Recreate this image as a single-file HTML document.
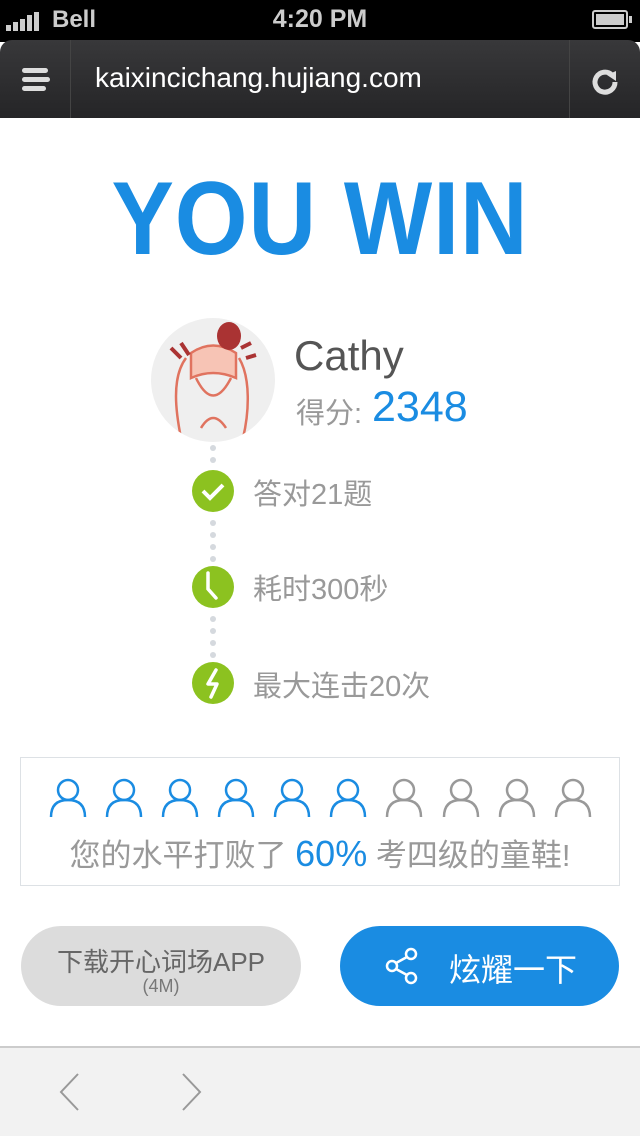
<!DOCTYPE html>
<html><head><meta charset="utf-8"><style>
*{margin:0;padding:0;box-sizing:border-box}
body{width:640px;height:1136px;position:relative;background:#fff;font-family:"Liberation Sans","Noto Sans CJK SC",sans-serif;overflow:hidden}
.a{position:absolute}
.cj{font-family:"Liberation Sans","Noto Sans CJK SC",sans-serif}
</style></head><body>
<div class="a" style="left:0;top:0;width:640px;height:42px;background:#000"></div>
<div class="a" style="left:6px;top:12px;display:flex;align-items:flex-end;gap:2px">
<div style="width:5px;height:6px;background:#ccc"></div><div style="width:5px;height:9px;background:#ccc"></div><div style="width:5px;height:12px;background:#ccc"></div><div style="width:5px;height:16px;background:#ccc"></div><div style="width:5px;height:19px;background:#ccc"></div></div>
<div class="a" style="left:52px;top:6px;color:#ccc;font-size:24px;font-weight:bold">Bell</div>
<div class="a" style="left:0;width:640px;top:5px;text-align:center;color:#ccc;font-size:25px;font-weight:bold">4:20 PM</div>
<div class="a" style="left:592px;top:10px;width:36px;height:19px;border:2px solid #ccc;border-radius:3px;padding:2px"><div style="background:#ccc;width:100%;height:100%"></div></div>
<div class="a" style="left:629px;top:16px;width:3px;height:7px;background:#ccc"></div>
<div class="a" style="left:0;top:40px;width:640px;height:78px;background:linear-gradient(#38383a,#252527);border-radius:12px 12px 0 0"></div>
<div class="a" style="left:70px;top:40px;width:1px;height:78px;background:#444"></div>
<div class="a" style="left:569px;top:40px;width:1px;height:78px;background:#444"></div>
<div class="a" style="left:22px;top:68px;width:26px;height:5px;background:#ddd;border-radius:3px"></div>
<div class="a" style="left:22px;top:77px;width:28px;height:5px;background:#ddd;border-radius:3px"></div>
<div class="a" style="left:22px;top:86px;width:24px;height:5px;background:#ddd;border-radius:3px"></div>
<div class="a" style="left:95px;top:62px;color:#fff;font-size:28px">kaixincichang.hujiang.com</div>
<svg class="a" style="left:590px;top:66px" width="30" height="30" viewBox="0 0 30 30"><path d="M22 9A10 10 0 1 0 25 16" fill="none" stroke="#ddd" stroke-width="5"/><path d="M17 9L26 5L26 15Z" fill="#ddd"/></svg>

<div class="a" style="left:0;width:640px;top:164px;text-align:center;color:#1a8ce2;font-size:104px;line-height:110px;font-weight:bold;transform:scaleX(0.9);letter-spacing:1px">YOU WIN</div>

<div class="a" style="left:151px;top:318px;width:124px;height:124px;border-radius:50%;background:#efefef;overflow:hidden">
<svg width="124" height="124" viewBox="0 0 124 124"><g fill="none" stroke="#e0735f" stroke-width="2.5"><path d="M35 40C20 60 25 95 30 120M88 40C100 60 98 95 92 120"/><path d="M40 35Q62 20 85 35L85 60Q62 50 40 60Z" fill="#f7c4b5"/><path d="M45 60Q62 95 80 60"/><path d="M50 110Q62 90 75 110"/></g><ellipse cx="78" cy="18" rx="12" ry="14" fill="#a33" /><path d="M20 30l10 10M30 25l8 12M90 30l10 -5M95 40l10 -3" stroke="#a33" stroke-width="4"/></svg></div>

<div class="a" style="left:294px;top:332px;color:#555;font-size:42px">Cathy</div>
<div class="a cj" style="left:296px;top:390px;color:#999;font-size:29px">得分:</div>
<div class="a" style="left:372px;top:383px;color:#1a8ce2;font-size:43px">2348</div>

<svg class="a" style="left:200px;top:440px" width="26" height="260">
<g fill="#d5d9de"><circle cx="13" cy="8" r="3"/><circle cx="13" cy="20" r="3"/>
<circle cx="13" cy="83" r="3"/><circle cx="13" cy="95" r="3"/><circle cx="13" cy="107" r="3"/><circle cx="13" cy="119" r="3"/>
<circle cx="13" cy="179" r="3"/><circle cx="13" cy="191" r="3"/><circle cx="13" cy="203" r="3"/><circle cx="13" cy="215" r="3"/></g></svg>
<svg class="a" style="left:191px;top:469px" width="44" height="240" viewBox="0 0 44 240">
<circle cx="22" cy="22" r="21" fill="#8cc220"/><path d="M12 22l7 7l13-13" fill="none" stroke="#fff" stroke-width="4"/>
<circle cx="22" cy="118" r="21" fill="#8cc220"/><path d="M17 104v16l8 9" fill="none" stroke="#fff" stroke-width="3.5" stroke-linecap="round"/>
<circle cx="22" cy="214" r="21" fill="#8cc220"/><path d="M25 201l-8 14h9l-6 13" fill="none" stroke="#fff" stroke-width="3.5" stroke-linecap="round" stroke-linejoin="round"/>
</svg>
<div class="a cj" style="left:253px;top:471px;color:#999;font-size:29px">答对21题</div>
<div class="a cj" style="left:253px;top:566px;color:#999;font-size:29px">耗时300秒</div>
<div class="a cj" style="left:253px;top:663px;color:#999;font-size:29px">最大连击20次</div>

<div class="a" style="left:20px;top:757px;width:600px;height:129px;border:1px solid #dde1e5"></div>
<svg class="a" style="left:48px;top:778px" width="550" height="40">
<defs><g id="p" fill="none" stroke-width="2.5"><circle cx="20" cy="12" r="10"/><path d="M3 39Q3 22 20 22Q37 22 37 39"/></g></defs>
<g stroke="#1a8ce2"><use href="#p" x="0"/><use href="#p" x="56"/><use href="#p" x="112"/><use href="#p" x="168"/><use href="#p" x="224"/><use href="#p" x="280"/></g>
<g stroke="#999"><use href="#p" x="336"/><use href="#p" x="393"/><use href="#p" x="449"/><use href="#p" x="505"/></g></svg>
<div class="a cj" style="left:0;width:640px;top:830px;text-align:center;color:#999;font-size:31px;white-space:nowrap">您的水平打败了 <span style="color:#1a8ce2;font-size:36px">60%</span> 考四级的童鞋!</div>

<div class="a" style="left:21px;top:926px;width:280px;height:80px;border-radius:40px;background:#dcdcdc"></div>
<div class="a cj" style="left:21px;width:280px;top:942px;text-align:center;color:#666;font-size:26px">下载开心词场APP</div>
<div class="a" style="left:21px;width:280px;top:976px;text-align:center;color:#777;font-size:18px">(4M)</div>
<div class="a" style="left:340px;top:926px;width:279px;height:80px;border-radius:40px;background:#1a8ce2"></div>
<svg class="a" style="left:384px;top:946px" width="38" height="40" viewBox="0 0 38 40"><g fill="none" stroke="#fff" stroke-width="2.5"><circle cx="27" cy="8" r="5"/><circle cx="8" cy="20" r="5"/><circle cx="27" cy="32" r="5"/><path d="M12 17L23 11M12 23L23 29"/></g></svg>
<div class="a cj" style="left:449px;top:945px;color:#fff;font-size:32px">炫耀一下</div>

<div class="a" style="left:0;top:1046px;width:640px;height:90px;background:#f2f2f2;border-top:2px solid #ccc"></div>
<svg class="a" style="left:55px;top:1070px" width="160" height="44"><g fill="none" stroke="#999" stroke-width="2"><path d="M23 4L6 22L23 40"/><path d="M128 4L145 22L128 40"/></g></svg>
</body></html>
